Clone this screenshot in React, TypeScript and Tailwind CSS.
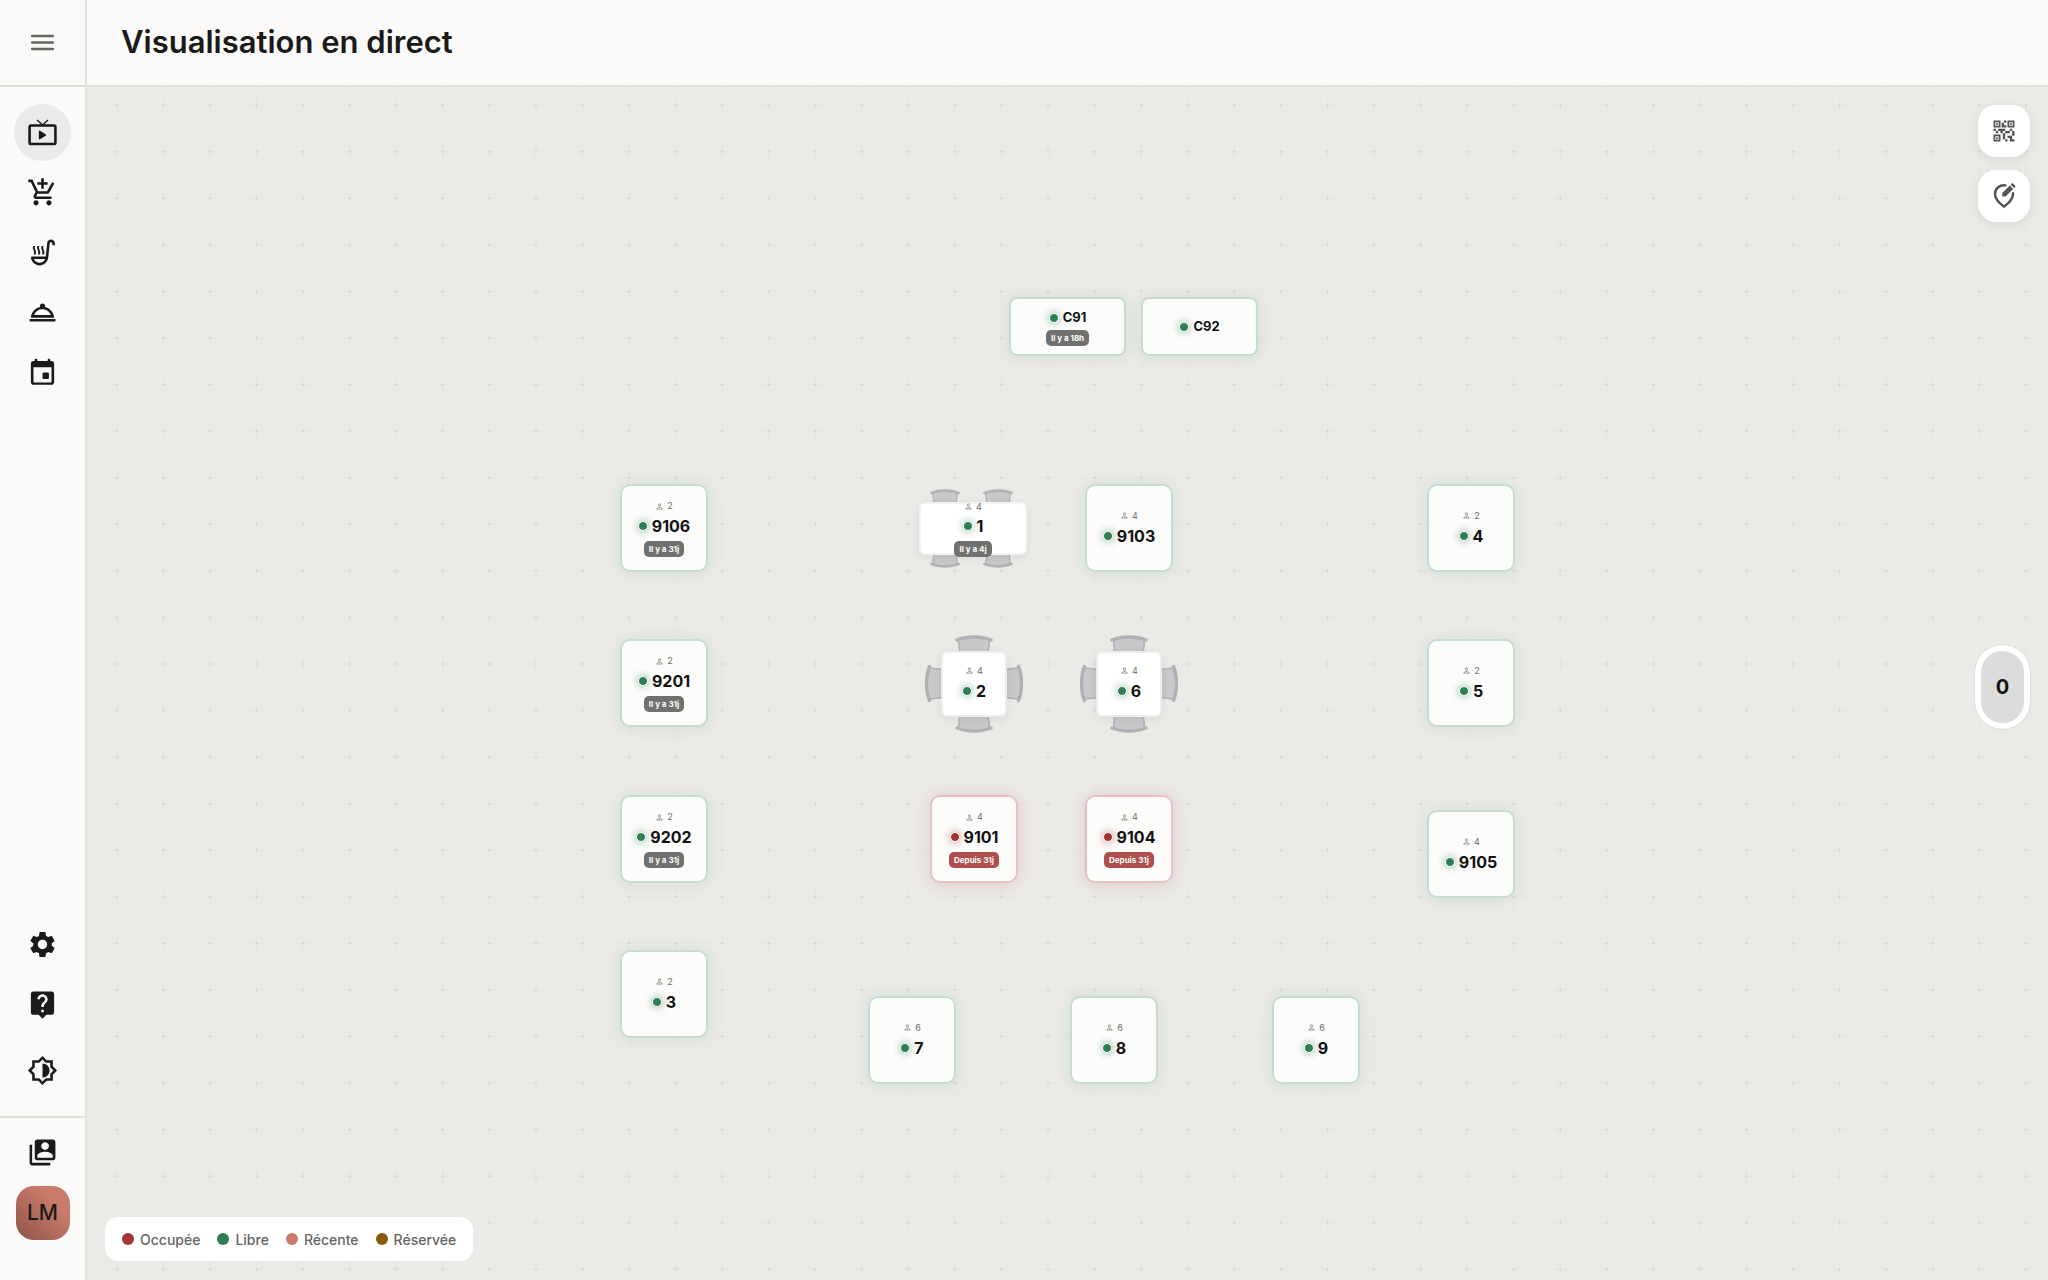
import React from 'react';
import clsx from 'clsx';
import {
  MdAddShoppingCart,
  MdLiveHelp,
  MdOutlineBrightness6,
  MdOutlinePerson,
  MdOutlineRoomService,
  MdOutlineSoupKitchen,
  MdQrCode2,
  MdSettings,
  MdSwitchAccount,
} from 'react-icons/md';

type Status = 'free' | 'busy';
type Shape = 'card' | 'counter' | 'four' | 'long';

interface FloorTable {
  name: string;
  x: number;
  y: number;
  shape: Shape;
  seats?: number;
  since?: string;
  status?: Status;
}

const TABLES: FloorTable[] = [
  { name: 'C91', x: 922, y: 210, shape: 'counter', since: 'Il y a 18h' },
  { name: 'C92', x: 1054, y: 210, shape: 'counter' },
  { name: '9106', x: 533, y: 397, shape: 'card', seats: 2, since: 'Il y a 31j' },
  { name: '9201', x: 533, y: 552, shape: 'card', seats: 2, since: 'Il y a 31j' },
  { name: '9202', x: 533, y: 708, shape: 'card', seats: 2, since: 'Il y a 31j' },
  { name: '3', x: 533, y: 863, shape: 'card', seats: 2 },
  { name: '1', x: 832, y: 415, shape: 'long', seats: 4, since: 'Il y a 4j' },
  { name: '9103', x: 998, y: 397, shape: 'card', seats: 4 },
  { name: '2', x: 854, y: 564, shape: 'four', seats: 4 },
  { name: '6', x: 1009, y: 564, shape: 'four', seats: 4 },
  { name: '9101', x: 843, y: 708, shape: 'card', seats: 4, since: 'Depuis 31j', status: 'busy' },
  { name: '9104', x: 998, y: 708, shape: 'card', seats: 4, since: 'Depuis 31j', status: 'busy' },
  { name: '4', x: 1340, y: 397, shape: 'card', seats: 2 },
  { name: '5', x: 1340, y: 552, shape: 'card', seats: 2 },
  { name: '9105', x: 1340, y: 723, shape: 'card', seats: 4 },
  { name: '7', x: 781, y: 909, shape: 'card', seats: 6 },
  { name: '8', x: 983, y: 909, shape: 'card', seats: 6 },
  { name: '9', x: 1185, y: 909, shape: 'card', seats: 6 },
];

const LEGEND = [
  { label: 'Occupée', color: 'bg-[#a43232]' },
  { label: 'Libre', color: 'bg-[#2f7f54]' },
  { label: 'Récente', color: 'bg-[#c97b6b]' },
  { label: 'Réservée', color: 'bg-[#8a5a0c]' },
];

const MenuIcon = () => (
  <svg width="31" height="31" viewBox="0 0 24 24" stroke="currentColor" strokeWidth="1.9" strokeLinecap="round">
    <path d="M4 7h16M4 12h16M4 17h16" />
  </svg>
);

const LiveIcon = () => (
  <svg width="31" height="31" viewBox="0 0 24 24" fill="none" stroke="currentColor">
    <rect x="2" y="6.6" width="20" height="14.3" rx="1.2" strokeWidth="2" />
    <path d="M7.8 2.4 12 6.200l4.200-3.800" strokeWidth="1" />
    <path d="M9.8 11.200v5.400l4.300-2.700z" fill="currentColor" strokeWidth="1.300" strokeLinejoin="round" />
  </svg>
);

const CalendarIcon = () => (
  <svg width="31" height="31" viewBox="0 0 24 24" fill="currentColor">
    <path d="M7 1.3c.6 0 1 .4 1 1V3h8v-.7c0-.6.4-1 1-1s1 .4 1 1V3h1c1.1 0 2 .9 2 2v14.5c0 1.1-.9 2-2 2H5c-1.1 0-2-.9-2-2V5c0-1.1.9-2 2-2h1v-.7c0-.6.4-1 1-1zM5 8v11c0 .4.3.7.7.7h12.6c.4 0 .7-.3.7-.7V8z" />
    <rect x="12" y="12" width="5" height="5" rx="1" />
  </svg>
);

const EditPinIcon = () => (
  <svg width="30" height="30" viewBox="0 0 24 24" fill="none" stroke="currentColor">
    <path
      d="M13.2 3.5C8.2 2.9 4.8 6.2 4.8 10.5c0 3.2 2.3 6.2 7.2 10 4.900-3.800 7.200-6.800 7.200-10v-.8"
      strokeWidth="2"
      strokeLinecap="round"
    />
    <path d="M10.600 12.300V9.600l6-6 2.700 2.700-6 6z" fill="currentColor" stroke="none" />
    <path d="M17.300 2.900l.9-.9c.3-.3.700-.3 1 0L20.900 3.700c.3.300.3.700 0 1l-.9.900z" fill="currentColor" stroke="none" />
  </svg>
);

// one chair seen from above, back rest on the upper side
const Chair = ({ className, size }: { className: string; size: number }) => (
  <svg className={clsx('absolute', className)} width={size} height={size / 2} viewBox="0 0 38 19">
    <path d="M3 4C12 1 26 1 35 4l-1.5 15h-29z" fill="#c8c9cb" />
    <path d="M3.5 6l1.5 13M34.5 6L33 19" stroke="#b2b3b5" strokeWidth="1.6" fill="none" />
    <path d="M2 5C12 1 26 1 36 5" stroke="#b0b1b2" strokeWidth="3.4" strokeLinecap="round" fill="none" />
  </svg>
);

const Chairs = ({ shape }: { shape: Shape }) => {
  if (shape === 'four') {
    return (
      <>
        <Chair size={38} className="-top-[16px] left-[14px]" />
        <Chair size={38} className="-bottom-[16px] left-[14px] rotate-180" />
        <Chair size={38} className="top-[23px] -left-[26px] -rotate-90" />
        <Chair size={38} className="top-[23px] -right-[26px] rotate-90" />
      </>
    );
  }
  return (
    <>
      <Chair size={30} className="-top-[13px] left-[11px]" />
      <Chair size={30} className="-top-[13px] left-[64px]" />
      <Chair size={30} className="-bottom-[13px] left-[11px] rotate-180" />
      <Chair size={30} className="-bottom-[13px] left-[64px] rotate-180" />
    </>
  );
};

const TableNode = ({ table }: { table: FloorTable }) => {
  const { name, x, y, shape, seats, since, status = 'free' } = table;
  const busy = status === 'busy';
  const seated = shape === 'four' || shape === 'long';

  return (
    <div className="absolute" style={{ left: x, top: y }}>
      {seated && <Chairs shape={shape} />}
      <button
        type="button"
        className={clsx(
          'relative flex flex-col items-center justify-center',
          shape === 'card' && 'h-[88px] w-[88px] gap-[3px] rounded-[10px] border-2 bg-[#fcfcfb]',
          shape === 'card' && !since && 'pb-0.5',
          shape === 'counter' && 'h-[59px] w-[117px] rounded-[8px] border-2 bg-[#fcfcfb]',
          shape === 'four' && 'h-[66px] w-[66px] gap-[3px] rounded-[6px] border-2 border-[#ededee] bg-white pb-1 shadow-[0_2px_8px_rgba(0,0,0,0.08)]',
          shape === 'long' && 'h-[53px] w-[108px] gap-[3px] rounded-[6px] border-2 border-[#f3f3f4] bg-white shadow-[0_2px_8px_rgba(0,0,0,0.08)]',
          !seated && !busy && 'border-[#c5dcd0] shadow-[0_1px_16px_rgba(47,127,84,0.12)]',
          !seated && busy && 'border-[#e8c2c0] shadow-[0_1px_16px_rgba(164,50,50,0.16)]'
        )}
      >
        {seats && (
          <span className="flex h-[14px] items-center gap-[3px] text-[9px] text-[#6b6b69]">
            <MdOutlinePerson size={9} className="text-[#8a8a88]" />
            {seats}
          </span>
        )}
        <span
          className={clsx(
            'flex h-5 items-center gap-1 font-bold text-[#121212]',
            shape === 'counter' ? 'text-[13px]' : 'text-[16px]'
          )}
        >
          <span
            className={clsx(
              'h-[10px] w-[10px] rounded-full border border-white',
              busy
                ? 'bg-[#a43232] shadow-[0_0_6px_2px_rgba(164,50,50,0.3)]'
                : 'bg-[#2f7f54] shadow-[0_0_6px_2px_rgba(47,127,84,0.3)]'
            )}
          />
          {name}
        </span>
        {since && (
          <span
            className={clsx(
              'mt-0.5 flex h-4 shrink-0 items-center rounded-[5px] px-[5px] text-[8px] font-bold whitespace-nowrap text-white',
              busy ? 'bg-[#b04e4e]' : 'bg-[#70706f]'
            )}
          >
            {since}
          </span>
        )}
      </button>
    </div>
  );
};

const NavButton = ({ label, active, children }: { label: string; active?: boolean; children: React.ReactNode }) => (
  <button
    type="button"
    aria-label={label}
    className={clsx('flex h-[57px] w-[57px] items-center justify-center rounded-full', active && 'bg-[#ebeae9]')}
  >
    {children}
  </button>
);

const FloorGrid = () => (
  <svg className="absolute inset-0 h-full w-full" aria-hidden="true">
    <defs>
      <pattern id="floor" width="60" height="60" patternUnits="userSpaceOnUse" patternTransform="translate(6.6 -5) scale(0.776)">
        <path d="M30 0v60M0 30h60" stroke="#e7e6e3" strokeWidth="1.3" />
        <circle cx="30" cy="30" r="1.2" fill="#c8c7c4" />
      </pattern>
    </defs>
    <rect width="100%" height="100%" fill="url(#floor)" />
  </svg>
);

const App: React.FC = () => {
  return (
    <div className="flex h-screen overflow-hidden bg-[#ebeae7] font-['Inter',sans-serif] text-[#1a1a18]">
      <aside className="flex w-[87px] shrink-0 flex-col border-r-2 border-[#e1e0dd] bg-[#fbfaf8]">
        <div className="flex h-[87px] shrink-0 items-center justify-center border-b-2 border-[#e1e0dd] text-[#666562]">
          <button type="button" aria-label="Menu">
            <MenuIcon />
          </button>
        </div>
        <nav className="flex flex-1 flex-col items-center gap-[3px] pt-[17px]">
          <NavButton label="Visualisation en direct" active><LiveIcon /></NavButton>
          <NavButton label="Commander"><MdAddShoppingCart size={31} /></NavButton>
          <NavButton label="Cuisine"><MdOutlineSoupKitchen size={31} /></NavButton>
          <NavButton label="Service"><MdOutlineRoomService size={31} /></NavButton>
          <NavButton label="Réservations"><CalendarIcon /></NavButton>
        </nav>
        <div className="flex flex-col items-center gap-[3px] pb-[17px]">
          <NavButton label="Paramètres"><MdSettings size={31} /></NavButton>
          <NavButton label="Aide"><MdLiveHelp size={31} /></NavButton>
          <div className="pt-1.5">
            <NavButton label="Thème"><MdOutlineBrightness6 size={31} /></NavButton>
          </div>
        </div>
        <div className="flex flex-col items-center gap-[5px] border-t-2 border-[#e1e0dd] pt-1.5 pb-10">
          <NavButton label="Changer de compte"><MdSwitchAccount size={31} /></NavButton>
          <button
            type="button"
            className="h-[54px] w-[54px] rounded-[18px] bg-linear-to-tr from-[#8d5348] to-[#c97b6b] to-70% text-[21px] font-medium"
          >
            LM
          </button>
        </div>
      </aside>

      <div className="flex min-w-0 flex-1 flex-col">
        <header className="flex h-[87px] shrink-0 items-center border-b-2 border-[#e1e0dd] bg-[#fbfaf8] pl-[34px]">
          <h1 className="text-[31px] font-semibold">Visualisation en direct</h1>
        </header>

        <main className="relative flex-1 overflow-hidden">
          <FloorGrid />
          {TABLES.map((table) => (
            <TableNode key={table.name} table={table} />
          ))}

          <div className="absolute top-[18px] right-[18px] flex flex-col gap-[13px] text-[#555452]">
            <button type="button" aria-label="QR codes" className="flex h-[52px] w-[52px] items-center justify-center rounded-[18px] bg-white shadow-[0_3px_12px_rgba(0,0,0,0.08)]">
              <MdQrCode2 size={28} />
            </button>
            <button type="button" aria-label="Modifier le plan" className="flex h-[52px] w-[52px] items-center justify-center rounded-[18px] bg-white shadow-[0_3px_12px_rgba(0,0,0,0.08)]">
              <EditPinIcon />
            </button>
          </div>

          <button
            type="button"
            className="absolute top-[558px] right-[18px] h-[84px] w-[55px] rounded-full border-[6px] border-white bg-[#dcdcdb] text-[20px] font-bold text-[#121212] outline-1 outline-[#e0dfdd]"
          >
            0
          </button>

          <ul className="absolute bottom-[19px] left-[18px] flex h-11 items-center gap-[17px] rounded-[13px] bg-white px-[17px] text-[14px] font-medium text-[#666562]">
            {LEGEND.map((item) => (
              <li key={item.label} className="flex items-center gap-1.5">
                <span className={clsx('h-3 w-3 rounded-full', item.color)} />
                {item.label}
              </li>
            ))}
          </ul>
        </main>
      </div>
    </div>
  );
};

export default App;
